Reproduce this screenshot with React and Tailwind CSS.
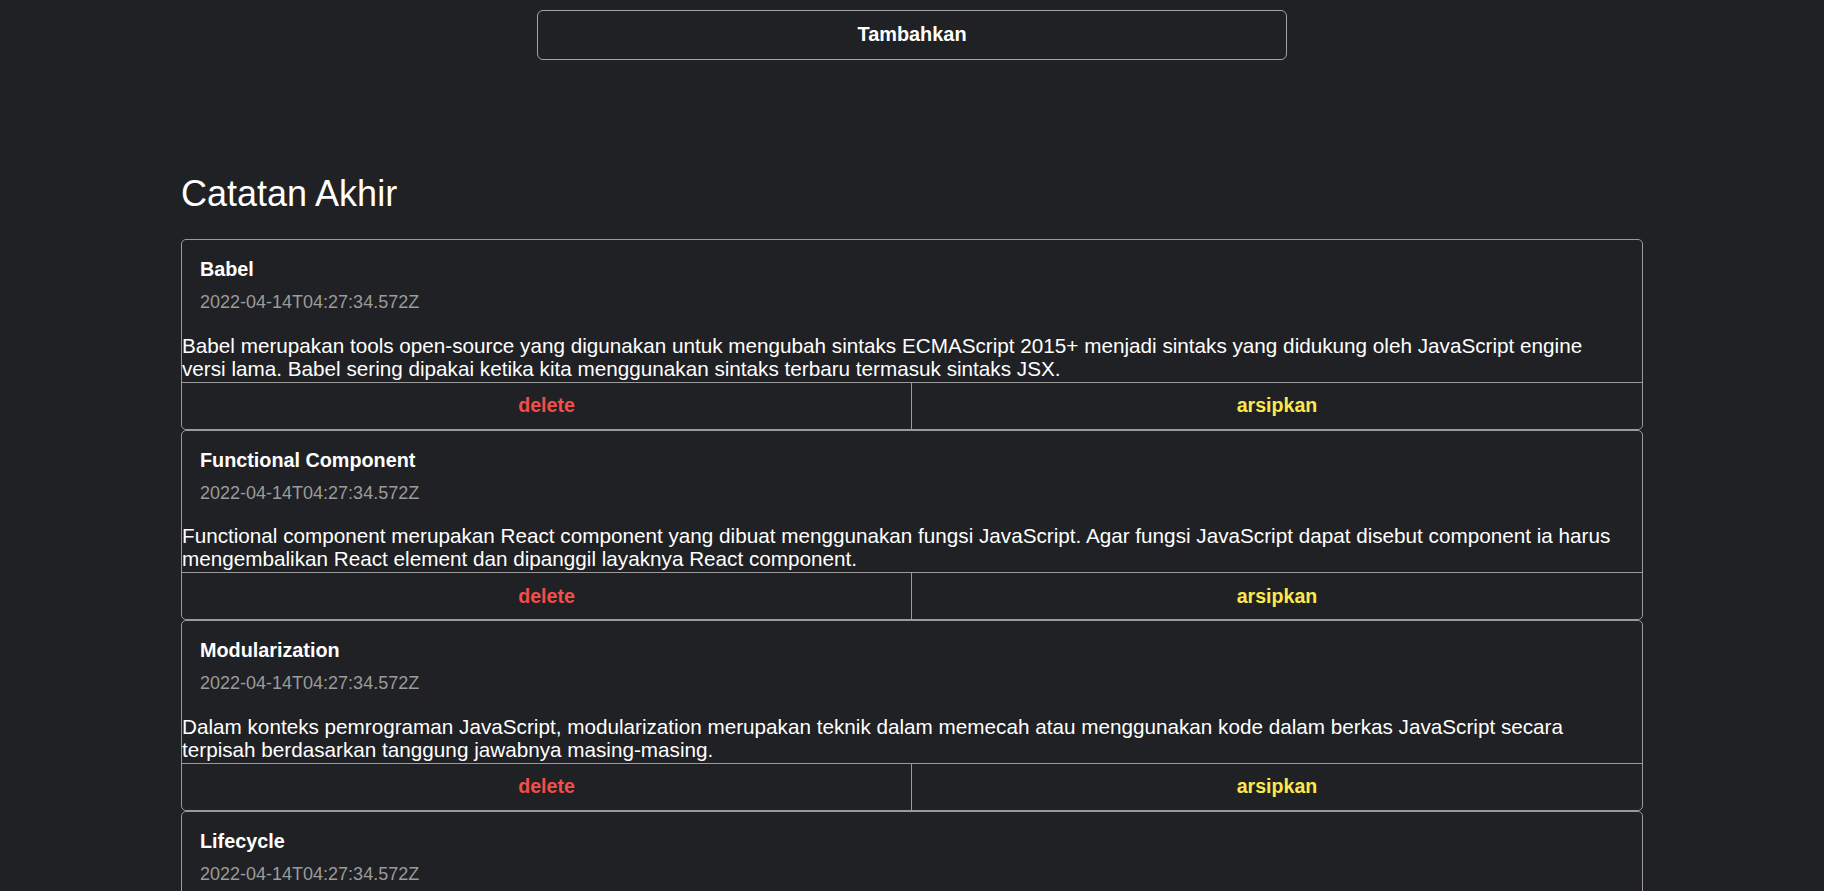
import React from 'react';

const notes = [
  {
    id: 1,
    title: 'Babel',
    createdAt: '2022-04-14T04:27:34.572Z',
    body: 'Babel merupakan tools open-source yang digunakan untuk mengubah sintaks ECMAScript 2015+ menjadi sintaks yang didukung oleh JavaScript engine versi lama. Babel sering dipakai ketika kita menggunakan sintaks terbaru termasuk sintaks JSX.',
  },
  {
    id: 2,
    title: 'Functional Component',
    createdAt: '2022-04-14T04:27:34.572Z',
    body: 'Functional component merupakan React component yang dibuat menggunakan fungsi JavaScript. Agar fungsi JavaScript dapat disebut component ia harus mengembalikan React element dan dipanggil layaknya React component.',
  },
  {
    id: 3,
    title: 'Modularization',
    createdAt: '2022-04-14T04:27:34.572Z',
    body: 'Dalam konteks pemrograman JavaScript, modularization merupakan teknik dalam memecah atau menggunakan kode dalam berkas JavaScript secara terpisah berdasarkan tanggung jawabnya masing-masing.',
  },
  {
    id: 4,
    title: 'Lifecycle',
    createdAt: '2022-04-14T04:27:34.572Z',
    body: 'Dalam konteks React component, lifecycle merupakan kumpulan method yang menjadi siklus hidup mulai dari component dibuat (constructor), dicetak (render), pasca-cetak (componentDidMount), dan sebagainya.',
  },
];

const NoteItem = ({ note }) => (
  <div className="border border-[#9a9a9a] rounded-[5px]">
    <div className="px-[18px] pt-[19px]">
      <h3 className="text-[19.8px] leading-[21.5px] font-bold text-white">{note.title}</h3>
      <p className="mt-[11.5px] text-[18px] leading-[20.7px] text-[#9b9b9b]">{note.createdAt}</p>
    </div>
    <p className="mt-[21px] mb-[2px] pr-[30px] text-[20.7px] leading-[23px] text-white">{note.body}</p>
    <div className="grid grid-cols-2 border-t border-[#9a9a9a]">
      <button className="h-[46px] border-r border-[#9a9a9a] text-[19.6px] font-bold text-[#f24e4a]">delete</button>
      <button className="h-[46px] text-[19.6px] font-bold text-[#fbe94c]">arsipkan</button>
    </div>
  </div>
);

const App = () => {
  return (
    <div className="min-h-screen bg-[#202124] text-white font-['Liberation_Sans',Arial,sans-serif]">
      <div className="pt-[10px]">
        <button className="block mx-auto w-[750px] h-[50px] border border-[#a3a3a3] rounded-[6px] text-[19.9px] font-bold text-white">
          Tambahkan
        </button>
      </div>

      <div className="w-[1462px] max-w-full mx-auto mt-[114px]">
        <h2 className="text-[36px] leading-[40px] text-white">Catatan Akhir</h2>
        <div className="mt-[25px]">
          {notes.map((note) => (
            <NoteItem key={note.id} note={note} />
          ))}
        </div>
      </div>
    </div>
  );
};

export default App;
